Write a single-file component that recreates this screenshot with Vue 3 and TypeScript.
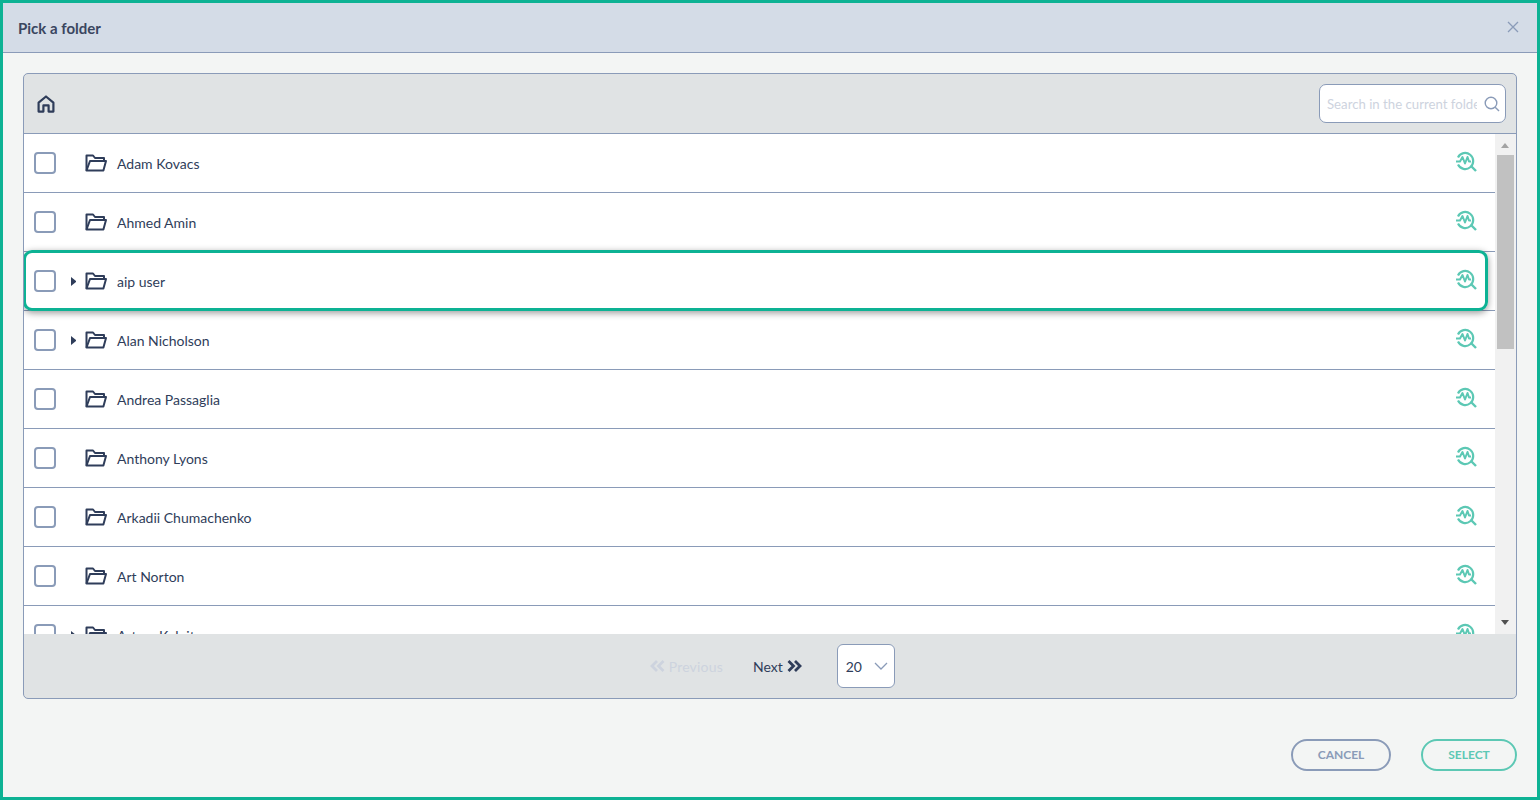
<script setup lang="ts">
interface Folder { name: string; expandable: boolean; selected?: boolean }
const folders: Folder[] = [
  { name: 'Adam Kovacs', expandable: false },
  { name: 'Ahmed Amin', expandable: false },
  { name: 'aip user', expandable: true, selected: true },
  { name: 'Alan Nicholson', expandable: true },
  { name: 'Andrea Passaglia', expandable: false },
  { name: 'Anthony Lyons', expandable: false },
  { name: 'Arkadii Chumachenko', expandable: false },
  { name: 'Art Norton', expandable: false },
  { name: 'Artem Kalnit', expandable: true },
]
</script>

<template>
  <div class="dialog">
    <header class="head">
      <h1>Pick a folder</h1>
      <svg class="close" width="12" height="12" viewBox="0 0 12 12"><path d="M1 1l10 10M11 1L1 11" fill="none" stroke="#8a9bb8" stroke-width="1.3" /></svg>
    </header>
    <main class="body">
      <section class="panel">
        <div class="toolbar">
          <svg width="18" height="18" viewBox="0 0 18 18" fill="none" stroke="#2f3d5a" stroke-width="2.2" stroke-linejoin="round">
            <path d="M1.6 7.6 9 1.5l7.4 6.1V16.6H11.6V10.4H6.4V16.6H1.6Z" />
          </svg>
          <div class="search">
            <span class="placeholder">Search in the current folder</span>
            <svg width="16" height="16" viewBox="0 0 16 16" fill="none" stroke="#8a9bb8" stroke-width="1.4"><circle cx="7" cy="7" r="5.8" /><path d="M11.2 11.2 15 15" /></svg>
          </div>
        </div>
        <div class="content">
          <ul class="list">
            <li v-for="f in folders" :key="f.name" class="row" :class="{ selected: f.selected }">
              <span class="check"></span>
              <span class="caret" :class="{ on: f.expandable }"></span>
              <svg class="folder" width="22" height="18" viewBox="0 0 22 18" fill="none" stroke="#2f3d5a" stroke-width="2" stroke-linejoin="round">
                <path d="M1.5 16.5V1.5H8l2 2.5h9V7" />
                <path d="M1.5 16.5 5 7h16l-2.6 9.5Z" />
              </svg>
              <span class="name">{{ f.name }}</span>
              <svg class="scan" width="22" height="22" viewBox="0 0 22 22" fill="none" stroke="#5cc8b4" stroke-width="2.2">
                <path d="M3 6.5A8 8 0 1 1 3 13.5" />
                <path d="M16.5 15.5l4.5 4.5" stroke-width="2.4" />
                <path d="M1 10.5h4L7.5 6l2.5 6.5L12.5 6l1.5 4.5H16" stroke-width="2" stroke-linejoin="round" />
              </svg>
            </li>
          </ul>
          <div class="scrollbar">
            <span class="arrow up"></span>
            <span class="thumb"></span>
            <span class="arrow down"></span>
          </div>
        </div>
        <div class="pager">
          <span class="page disabled">
            <svg width="15" height="12" viewBox="0 0 15 12" fill="none" stroke="#cdd3de" stroke-width="2.8"><path d="M7 1 2 6l5 5M13.5 1l-5 5 5 5" /></svg>
            Previous
          </span>
          <span class="page">
            Next
            <svg width="15" height="12" viewBox="0 0 15 12" fill="none" stroke="#2f3d5a" stroke-width="2.8"><path d="M1.5 1l5 5-5 5M8 1l5 5-5 5" /></svg>
          </span>
          <div class="size">
            <span>20</span>
            <svg width="14" height="8" viewBox="0 0 14 8" fill="none" stroke="#8a9bb8" stroke-width="1.3"><path d="M1 1l6 6 6-6" /></svg>
          </div>
        </div>
      </section>
      <div class="actions">
        <button class="btn cancel">CANCEL</button>
        <button class="btn select">SELECT</button>
      </div>
    </main>
  </div>
</template>

<style>
html, body { margin: 0; background: #f3f5f4; }
</style>

<style scoped>
.dialog {
  box-sizing: border-box;
  width: 1540px;
  height: 800px;
  border: 3px solid #0db294;
  background: #f3f5f4;
  font-family: Lato, sans-serif;
  color: #2f3d5a;
  display: flex;
  flex-direction: column;
  overflow: hidden;
}
.head {
  box-sizing: border-box;
  height: 50px;
  flex: none;
  display: flex;
  align-items: center;
  justify-content: space-between;
  padding: 0 18px 0 15px;
  background: #d4dce7;
  border-bottom: 1px solid #8a9bb8;
}
.head h1 { margin: 0; font-size: 15px; font-weight: 700; color: #3a4660; }
.close { margin-top: -2px; }
.body { flex: 1; padding: 20px 20px 0; display: flex; flex-direction: column; min-height: 0; }
.panel {
  box-sizing: border-box;
  height: 626px;
  flex: none;
  border: 1px solid #8a9bb8;
  border-radius: 5px;
  display: flex;
  flex-direction: column;
  overflow: hidden;
  background: #e0e3e4;
}
.toolbar {
  box-sizing: border-box;
  height: 60px;
  flex: none;
  display: flex;
  align-items: center;
  justify-content: space-between;
  padding: 0 10px 0 13px;
  border-bottom: 1px solid #8a9bb8;
}
.search {
  box-sizing: border-box;
  width: 187px;
  height: 39px;
  background: #fff;
  border: 1px solid #8a9bb8;
  border-radius: 7px;
  display: flex;
  align-items: center;
  justify-content: space-between;
  padding: 0 5px 0 7px;
}
.placeholder {
  width: 150px;
  overflow: hidden;
  white-space: nowrap;
  font-size: 13.2px;
  color: #cdd3de;
}
.content { height: 500px; flex: none; display: flex; background: #fff; overflow: hidden; }
.list { flex: 1; margin: 0; padding: 0; list-style: none; overflow: hidden; }
.row {
  box-sizing: border-box;
  height: 59px;
  display: flex;
  align-items: center;
  padding: 0 18px 0 10px;
  border-bottom: 1px solid #8a9bb8;
  position: relative;
  font-size: 14px;
}
.row.selected::after {
  content: '';
  position: absolute;
  left: -1px;
  right: 7px;
  top: -2px;
  bottom: -1px;
  border: 3px solid #0db294;
  border-radius: 9px;
  box-shadow: 0 2px 7px rgba(0, 0, 0, 0.4);
  pointer-events: none;
}
.check {
  box-sizing: border-box;
  width: 22px;
  height: 22px;
  flex: none;
  border: 2px solid #8a9bb8;
  border-radius: 4px;
  background: #fff;
}
.caret { width: 5px; height: 9px; flex: none; margin-left: 15px; }
.caret.on {
  box-sizing: border-box;
  width: 0;
  border-style: solid;
  border-width: 4.5px 0 4.5px 5px;
  border-color: transparent transparent transparent #2f3d5a;
}
.folder { margin-left: 9px; flex: none; }
.name { margin-left: 10px; flex: 1; color: #2f3d5a; }
.scan { flex: none; margin-top: -3px; }
.scrollbar {
  width: 21px;
  flex: none;
  background: #f1f1f1;
  position: relative;
}
.thumb {
  position: absolute;
  left: 2px;
  top: 21px;
  width: 17px;
  height: 194px;
  background: #c1c1c1;
}
.arrow {
  position: absolute;
  left: 6px;
  width: 0;
  height: 0;
  border-left: 4.5px solid transparent;
  border-right: 4.5px solid transparent;
}
.arrow.up { top: 9px; border-bottom: 5px solid #a3a3a3; }
.arrow.down { bottom: 9px; border-top: 5px solid #505050; }
.pager {
  flex: 1;
  display: flex;
  align-items: center;
  justify-content: center;
  font-size: 14px;
  padding-left: 4.4px;
}
.page { display: flex; align-items: center; gap: 4px; color: #2f3d5a; margin-right: 35px; }
.page.disabled { color: #cdd3de; margin-right: 30px; letter-spacing: 0.2px; }
.size {
  box-sizing: border-box;
  width: 58px;
  height: 44px;
  background: #fff;
  border: 1px solid #8a9bb8;
  border-radius: 6px;
  display: flex;
  align-items: center;
  justify-content: space-between;
  padding: 0 6px 0 8px;
}
.actions { display: flex; justify-content: flex-end; gap: 30px; margin-top: 40px; }
.btn {
  box-sizing: border-box;
  height: 32px;
  border-radius: 16px;
  background: transparent;
  font-family: Lato, sans-serif;
  font-size: 12px;
  font-weight: 700;
  padding: 0 0 2px;
}
.cancel { width: 100px; border: 2px solid #8a9bb8; color: #8a9bb8; }
.select { width: 96px; border: 2px solid #5cc8b4; color: #5cc8b4; }
</style>
